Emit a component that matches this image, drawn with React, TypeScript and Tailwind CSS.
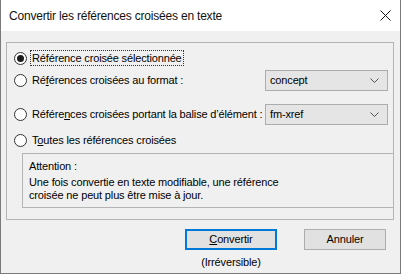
import React from 'react';

const font = { fontFamily: '"Liberation Sans", Arial, sans-serif' };

const Radio = ({ checked }: { checked?: boolean }) => (
  <div className="w-[13px] h-[13px] rounded-full border border-[#333333] bg-white flex items-center justify-center shrink-0">
    {checked && <div className="w-[7px] h-[7px] rounded-full bg-[#1a1a1a]" />}
  </div>
);

const Select = ({ value }: { value: string }) => (
  <div className="ml-auto mr-[5px] w-[123px] h-[21px] bg-[#e5e5e5] border border-[#acacac] flex items-center pl-[4px] pr-[8px]">
    <span className="flex-grow">{value}</span>
    <svg width="9" height="6" viewBox="0 0 9 6">
      <polyline points="0.5,0.5 4.5,4.5 8.5,0.5" fill="none" stroke="#505050" strokeWidth="1" />
    </svg>
  </div>
);

const App = () => {
  return (
    <div
      className="w-[401px] h-[274px] flex flex-col border-x border-b border-[#7a7a7a] bg-[#f0f0f0] text-[11px] tracking-[-0.15px] text-black select-none"
      style={font}
    >
      <div className="h-[31px] bg-white flex items-center pl-[8px] pr-[9px] shrink-0">
        <span className="flex-grow text-[12px] tracking-[-0.2px] text-[#111111]">Convertir les références croisées en texte</span>
        <svg width="11" height="11" viewBox="0 0 11 11">
          <path d="M0.5 0.5 L10.5 10.5 M10.5 0.5 L0.5 10.5" stroke="#111111" strokeWidth="1" />
        </svg>
      </div>

      <div className="flex-grow pl-[5px] flex flex-col">
        <div className="mt-[11px] w-[388px] h-[178px] border border-[#b4b4b4] flex flex-col pl-[7px]">
          <div className="mt-[6px] h-[18px] flex items-center">
            <Radio checked />
            <span className="ml-[3px] px-[1px] leading-[14px] border border-dotted border-[#333333]">Référence croisée sélectionnée</span>
          </div>
          <div className="mt-[3px] h-[21px] flex items-center">
            <Radio />
            <span className="ml-[3px] px-[1px] border border-transparent">
              Ré<u>f</u>érences croisées au format :
            </span>
            <Select value="concept" />
          </div>
          <div className="mt-[13px] h-[21px] flex items-center">
            <Radio />
            <span className="ml-[3px] px-[1px] border border-transparent">
              Référe<u>n</u>ces croisées portant la balise d’élément :
            </span>
            <Select value="fm-xref" />
          </div>
          <div className="mt-[6px] h-[18px] flex items-center">
            <Radio />
            <span className="ml-[3px] px-[1px] border border-transparent">
              T<u>o</u>utes les références croisées
            </span>
          </div>
          <div className="mt-[4px] ml-[8px] w-[372px] h-[55px] border border-[#b4b4b4] pl-[6px] pt-[6px] leading-[13px]">
            <div>Attention :</div>
            <div className="mt-[3px]">Une fois convertie en texte modifiable, une référence</div>
            <div>croisée ne peut plus être mise à jour.</div>
          </div>
        </div>

        <div className="mt-[9px] flex items-start">
          <div className="ml-[179px] w-[92px] flex flex-col items-center">
            <div className="w-[92px] h-[21px] bg-[#e1e1e1] border-2 border-[#0078d7] flex items-center justify-center">
              <span>
                <u>C</u>onvertir
              </span>
            </div>
            <div className="mt-[6px] leading-[13px]">(Irréversible)</div>
          </div>
          <div className="ml-[27px] w-[82px] h-[21px] bg-[#e1e1e1] border border-[#adadad] flex items-center justify-center">
            Annuler
          </div>
        </div>
      </div>
    </div>
  );
};

export default App;
